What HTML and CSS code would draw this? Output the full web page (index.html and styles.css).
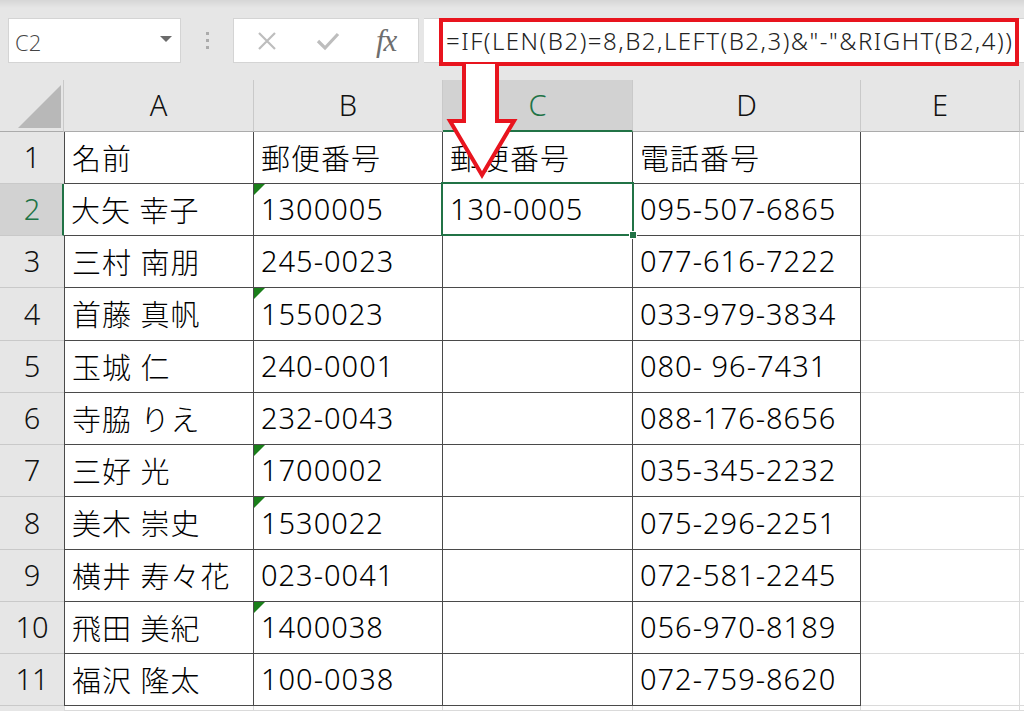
FILE: index.html
```html
<!DOCTYPE html>
<html lang="ja">
<head>
<meta charset="utf-8">
<title>Excel</title>
<link rel="stylesheet" href="styles.css">
</head>
<body>
<div class="topbar">
  <div class="namebox"><span class="nb-text">C2</span><span class="nb-caret"></span></div>
  <div class="grip"><i></i><i></i><i></i></div>
  <div class="fbtns">
    <svg class="ic-x" width="22" height="22" viewBox="0 0 22 22"><path d="M3 3L19 19M19 3L3 19" stroke="#bdbdbd" stroke-width="2.2" fill="none"/></svg>
    <svg class="ic-ok" width="24" height="22" viewBox="0 0 24 22"><path d="M2 11L9 18L22 4" stroke="#bdbdbd" stroke-width="3.2" fill="none"/></svg>
    <span class="ic-fx">fx</span>
  </div>
  <div class="finput"><div class="formula">=IF(LEN(B2)=8,B2,LEFT(B2,3)&amp;"-"&amp;RIGHT(B2,4))</div></div>
</div>
<div class="sheet">
  <div class="corner"><svg width="64" height="51" viewBox="0 0 64 51"><path d="M18 48L61 5L61 48Z" fill="#b8b8b8"/></svg></div>
  <div class="ch">A</div><div class="ch">B</div><div class="ch sel">C</div><div class="ch">D</div><div class="ch">E</div><div class="ch last"></div>

  <div class="rh">1</div><div class="c t first">名前</div><div class="c t">郵便番号</div><div class="c t">郵便番号</div><div class="c t">電話番号</div><div class="c"></div><div class="c"></div>
  <div class="rh sel">2</div><div class="c t first">大矢 幸子</div><div class="c t tri">1300005</div><div class="c t active">130-0005<span class="handle"></span></div><div class="c t">095-507-6865</div><div class="c"></div><div class="c"></div>
  <div class="rh">3</div><div class="c t first">三村 南朋</div><div class="c t">245-0023</div><div class="c t"></div><div class="c t">077-616-7222</div><div class="c"></div><div class="c"></div>
  <div class="rh">4</div><div class="c t first">首藤 真帆</div><div class="c t tri">1550023</div><div class="c t"></div><div class="c t">033-979-3834</div><div class="c"></div><div class="c"></div>
  <div class="rh">5</div><div class="c t first">玉城 仁</div><div class="c t">240-0001</div><div class="c t"></div><div class="c t">080- 96-7431</div><div class="c"></div><div class="c"></div>
  <div class="rh">6</div><div class="c t first">寺脇 りえ</div><div class="c t">232-0043</div><div class="c t"></div><div class="c t">088-176-8656</div><div class="c"></div><div class="c"></div>
  <div class="rh">7</div><div class="c t first">三好 光</div><div class="c t tri">1700002</div><div class="c t"></div><div class="c t">035-345-2232</div><div class="c"></div><div class="c"></div>
  <div class="rh">8</div><div class="c t first">美木 崇史</div><div class="c t tri">1530022</div><div class="c t"></div><div class="c t">075-296-2251</div><div class="c"></div><div class="c"></div>
  <div class="rh">9</div><div class="c t first">横井 寿々花</div><div class="c t">023-0041</div><div class="c t"></div><div class="c t">072-581-2245</div><div class="c"></div><div class="c"></div>
  <div class="rh">10</div><div class="c t first">飛田 美紀</div><div class="c t tri">1400038</div><div class="c t"></div><div class="c t">056-970-8189</div><div class="c"></div><div class="c"></div>
  <div class="rh">11</div><div class="c t first">福沢 隆太</div><div class="c t">100-0038</div><div class="c t"></div><div class="c t">072-759-8620</div><div class="c"></div><div class="c"></div>
  <div class="rh light"></div><div class="c first-light"></div><div class="c"></div><div class="c"></div><div class="c"></div><div class="c"></div><div class="c"></div>
</div>
<svg class="arrow" width="1024" height="711" viewBox="0 0 1024 711">
  <path d="M464 64L464 121L450 121L482 175L514 121L497 121L497 64" fill="#fff" stroke="#e8141e" stroke-width="4" stroke-linejoin="miter"/>
</svg>
</body>
</html>
```
FILE: styles.css
```css
html, body {
  margin: 0;
  padding: 0;
}
body {
  width: 1024px;
  height: 711px;
  overflow: hidden;
  position: relative;
  background: #ffffff;
  font-family: "Noto Sans", "Noto Sans CJK JP", sans-serif;
  color: #000;
}
.topbar {
  height: 80px;
  box-sizing: border-box;
  padding-top: 18px;
  display: flex;
  align-items: flex-start;
  background: linear-gradient(#d6d6d6 0px, #e6e6e6 8px, #e6e6e6 100%);
}
.namebox {
  margin-left: 8px;
  width: 173px;
  height: 45px;
  box-sizing: border-box;
  background: #fff;
  border: 1px solid #d4d4d4;
  display: flex;
  align-items: center;
  justify-content: space-between;
  padding: 0 8px 0 6px;
}
.nb-text {
  font-family: "Open Sans", "Liberation Sans", sans-serif;
  font-size: 22px;
  font-weight: 300;
  color: #444;
  padding-top: 3px;
}
.nb-caret {
  width: 0;
  height: 0;
  border-left: 6px solid transparent;
  border-right: 6px solid transparent;
  border-top: 6px solid #6b6b6b;
  margin-top: -4px;
}
.grip {
  width: 52px;
  height: 45px;
  display: flex;
  flex-direction: column;
  align-items: center;
  justify-content: center;
  gap: 4px;
}
.grip i {
  display: block;
  width: 3px;
  height: 3px;
  background: #ababab;
}
.fbtns {
  width: 186px;
  height: 45px;
  box-sizing: border-box;
  background: #fff;
  border: 1px solid #d4d4d4;
  display: flex;
  align-items: center;
  padding-left: 22px;
}
.ic-x { margin-right: 38px; }
.ic-ok { margin-right: 36px; }
.ic-fx {
  font-family: "Liberation Serif", serif;
  font-style: italic;
  font-size: 31px;
  color: #6e6e6e;
  letter-spacing: -1px;
  margin-top: 0px;
}
.finput {
  margin-left: 5px;
  flex: 1;
  height: 45px;
  background: #fff;
  border-top: 1px solid #d4d4d4;
  border-bottom: 1px solid #d4d4d4;
  box-sizing: border-box;
  padding-left: 15px;
}
.formula {
  margin-top: -1px;
  width: 580px;
  height: 48px;
  box-sizing: border-box;
  border: 4px solid #e8141e;
  font-family: "Noto Sans", "Noto Sans CJK JP", sans-serif;
  font-size: 24px;
  font-weight: 300;
  letter-spacing: 1.5px;
  line-height: 38px;
  padding-left: 3px;
  color: #222;
  white-space: nowrap;
  overflow: hidden;
}
.sheet {
  display: grid;
  grid-template-columns: 64px 190px 189px 190px 228px 159px 1fr;
  grid-template-rows: 52px 52px 52px 52px 53px 52px 52px 52px 53px 52px 52px 52px 1fr;
  height: 631px;
}
.sheet > div {
  box-sizing: border-box;
  min-width: 0;
}
.corner {
  background: #e6e6e6;
  border-right: 1px solid #c9c9c9;
  border-bottom: 1px solid #ababab;
}
.corner svg { display: block; }
.ch {
  background: #e6e6e6;
  border-right: 1px solid #c9c9c9;
  border-bottom: 1px solid #ababab;
  display: flex;
  align-items: center;
  justify-content: center;
  font-size: 29px;
  font-weight: 300;
  color: #111;
  padding-bottom: 2px;
}
.ch.sel {
  background: #d2d2d2;
  color: #217346;
  border-bottom: 2px solid #217346;
  padding-bottom: 1px;
}
.ch.last { border-right: none; }
.rh {
  background: #e6e6e6;
  border-bottom: 1px solid #c9c9c9;
  display: flex;
  align-items: center;
  justify-content: center;
  font-size: 29px;
  font-weight: 300;
  color: #111;
  padding-bottom: 2px;
}
.rh.sel {
  background: #d2d2d2;
  color: #217346;
  border-right: 2px solid #217346;
  padding-left: 2px;
}
.rh.light { border-bottom: none; }
.c {
  background: #fff;
  border-right: 1px solid #dadada;
  border-bottom: 1px solid #dadada;
  display: flex;
  align-items: center;
  padding: 0 0 2px 7px;
  font-size: 29px;
  font-weight: 300;
  letter-spacing: 1px;
  white-space: nowrap;
  overflow: visible;
  position: relative;
}
.c.t {
  border-right: 1px solid #4a4a4a;
  border-bottom: 1px solid #4a4a4a;
}
.c.first {
  border-left: 1px solid #4a4a4a;
  padding-left: 7px;
}
.rh.sel + .c.first { border-left: none; }
.c.first-light { border-left: 1px solid #dadada; }
.c.tri::before {
  content: "";
  position: absolute;
  left: 0;
  top: 0;
  width: 0;
  height: 0;
  border-top: 11px solid #1a7f1a;
  border-right: 11px solid transparent;
}
.c.active::after {
  content: "";
  position: absolute;
  left: -2px;
  top: -2px;
  right: -2px;
  bottom: -1px;
  border: 2px solid #217346;
  z-index: 2;
}
.handle {
  position: absolute;
  right: -5px;
  bottom: -4px;
  width: 6px;
  height: 6px;
  background: #217346;
  border: 1px solid #fff;
  z-index: 3;
}
.arrow {
  position: absolute;
  left: 0;
  top: 0;
  pointer-events: none;
  z-index: 5;
}
```
